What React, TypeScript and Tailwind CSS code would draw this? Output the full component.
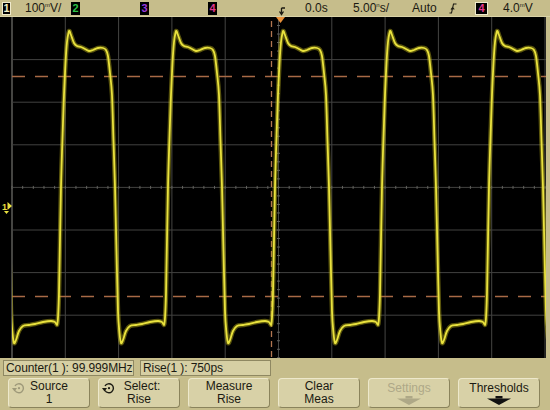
import React from "react"

type Pt = [number, number]

// one period of the trace, x relative to the rising edge midpoint
const PERIOD: Pt[] = [
  [-3.5, 322], [-2, 292], [0, 186], [2, 122], [3, 94], [4.5, 62], [6, 41], [7.5, 32], [8.5, 30],
  [10, 34], [13, 42], [16, 45], [20, 46], [24, 48], [28, 50], [32, 49], [37, 47], [42, 47],
  [45, 49], [47, 55], [49, 72], [51, 94], [52.5, 140], [54, 186], [55.5, 250], [57, 310],
  [58.5, 332], [60, 342], [62, 339], [65, 330], [69, 325], [75, 324], [81, 323], [89, 321],
  [97, 320], [101, 321],
]

const RISE0 = 61
const STEP = 107

function tracePoints(): Pt[] {
  const pts: Pt[] = []
  for (let k = -1; k <= 5; k++) {
    const r = RISE0 + STEP * k
    PERIOD.forEach(([dx, y]) => {
      const x = r + dx
      if (x > -10 && x < 560) pts.push([x, y])
    })
  }
  return pts
}

function smooth(pts: Pt[]) {
  let d = `M${pts[0][0]},${pts[0][1]}`
  for (let i = 0; i < pts.length - 1; i++) {
    const p0 = pts[i - 1] || pts[i]
    const p1 = pts[i]
    const p2 = pts[i + 1]
    const p3 = pts[i + 2] || p2
    const c1x = p1[0] + (p2[0] - p0[0]) / 6
    const c1y = p1[1] + (p2[1] - p0[1]) / 6
    const c2x = p2[0] - (p3[0] - p1[0]) / 6
    const c2y = p2[1] - (p3[1] - p1[1]) / 6
    d += ` C${c1x.toFixed(2)},${c1y.toFixed(2)} ${c2x.toFixed(2)},${c2y.toFixed(2)} ${p2[0]},${p2[1]}`
  }
  return d
}

const X0 = 12
const DX = 53.3
const Y0 = 16
const DY = 42.6

const Screen = () => {
  const vx = Array.from({ length: 11 }, (_, i) => X0 + DX * i)
  const hy = Array.from({ length: 9 }, (_, i) => Y0 + DY * i)
  const cx = X0 + DX * 5
  const cy = Y0 + DY * 4
  const ticksX = Array.from({ length: 51 }, (_, i) => X0 + (DX / 5) * i)
  const ticksY = Array.from({ length: 41 }, (_, i) => Y0 + (DY / 5) * i)
  const d = smooth(tracePoints())

  return (
    <svg width="546" height="341" viewBox="0 16 546 341" className="block">
      <defs>
        <clipPath id="grat">
          <rect x="12" y="16" width="534" height="341" />
        </clipPath>
      </defs>
      <rect x="0" y="16" width="546" height="341" fill="#000" />

      {/* graticule */}
      {vx.map((x, i) => (
        <line key={"v" + i} x1={x} x2={x} y1={16} y2={357} stroke={i === 0 ? "#8a8a84" : "#454543"} strokeWidth="1" />
      ))}
      {hy.slice(1, 8).map((y, i) => (
        <line key={"h" + i} x1={12} x2={546} y1={y} y2={y} stroke="#424240" strokeWidth="1" />
      ))}
      {ticksX.map((x, i) => (
        <line key={"tx" + i} x1={x} x2={x} y1={cy - 1.5} y2={cy + 1.5} stroke="#62625e" strokeWidth="1" />
      ))}
      {ticksY.map((y, i) => (
        <line key={"ty" + i} x1={cx - 1.5} x2={cx + 1.5} y1={y} y2={y} stroke="#62625e" strokeWidth="1" />
      ))}

      {/* threshold cursors */}
      <line x1="12" x2="546" y1="75.5" y2="75.5" stroke="#a86a46" strokeWidth="1.4" strokeDasharray="13 10" />
      <line x1="12" x2="546" y1="295.5" y2="295.5" stroke="#a86a46" strokeWidth="1.4" strokeDasharray="13 10" />
      {/* trigger position */}
      <line x1="271.5" x2="271.5" y1="20" y2="357" stroke="#b07650" strokeWidth="1.3" strokeDasharray="6 4" />
      <polygon points="276,16 285,16 280.5,22" fill="#e8903a" />

      {/* trace */}
      <g clipPath="url(#grat)" fill="none" strokeLinejoin="round" strokeLinecap="round">
        <path d={d} stroke="#b3aa18" strokeWidth="4.5" opacity="0.5" />
        <path d={d} stroke="#e9e23e" strokeWidth="1.8" />
      </g>

      {/* ground marker */}
      <text x="2" y="209" fontSize="9" fontWeight="bold" fill="#e8e040" fontFamily="Liberation Sans, Arial, sans-serif">1</text>
      <polygon points="7.5,201 12,205 7.5,209" fill="#e8e040" />
      <polygon points="4,210 9,210 6.5,213" fill="#e8e040" />
    </svg>
  )
}

const ChanBox = ({ n, color, active }: { n: string; color: string; active?: boolean }) => (
  <div
    className={
      "flex items-center justify-center bg-black h-[13px] text-[11px] font-bold leading-none " +
      (active ? "border border-[#efeacc]" : "")
    }
    style={{ color }}
  >
    {n}
  </div>
)

// the scope font draws "mV" / "ns" as one squeezed glyph
const Unit = ({ small, big }: { small: string; big: string }) => (
  <span className="whitespace-nowrap">
    <span className="text-[6px] align-top">{small}</span>
    <span>{big}</span>
  </span>
)

const TopBar = () => (
  <div className="flex items-center h-[16px] bg-[#c6bd8b] text-[12px] leading-none text-[#1b1a12] whitespace-nowrap">
    <div className="ml-[2px] w-[9px]">
      <ChanBox n="1" color="#f2eec6" active />
    </div>
    <div className="ml-[14px] w-[34px]">
      100<Unit small="m" big="V" />/
    </div>
    <div className="ml-[12px] w-[9px]">
      <ChanBox n="2" color="#2fc248" />
    </div>
    <div className="ml-[60px] w-[9px]">
      <ChanBox n="3" color="#9a38dc" />
    </div>
    <div className="ml-[59px] w-[9px]">
      <ChanBox n="4" color="#e0358e" />
    </div>
    <svg className="ml-[60px]" width="10" height="16" viewBox="0 0 10 16">
      <path d="M4.5 8 L4.5 14 M8 8 L4.5 8 M2.5 11.5 L4.5 14.5 L6.5 11.5" stroke="#1b1a12" strokeWidth="1.3" fill="none" />
    </svg>
    <div className="ml-[18px] w-[26px]">0.0s</div>
    <div className="ml-[22px] w-[40px]">
      5.00<Unit small="n" big="s" />/
    </div>
    <div className="ml-[19px] w-[28px]">Auto</div>
    <svg className="ml-[9px]" width="8" height="16" viewBox="0 0 8 16">
      <path d="M0.5 13 L2.5 13 L4.5 4 L7.5 4 M2 9.5 L3.7 7.5 L5.2 9.5" stroke="#1b1a12" strokeWidth="1.1" fill="none" />
    </svg>
    <div className="ml-[18px] w-[13px]">
      <ChanBox n="4" color="#e0358e" active />
    </div>
    <div className="ml-[15px]">
      4.0<Unit small="m" big="V" />
    </div>
  </div>
)

const KnobIcon = ({ faded }: { faded?: boolean }) => (
  <svg width="15" height="12" viewBox="0 0 15 12" className={faded ? "opacity-30" : ""}>
    <path d="M4 4 A4.5 4.5 0 1 1 4 8.5" stroke="#1b1a12" strokeWidth="1.4" fill="none" />
    <polygon points="1,6 6,6 3.5,9.5" fill="#1b1a12" />
    <circle cx="8" cy="6.2" r="1.1" fill="#1b1a12" />
  </svg>
)

const DownArrow = ({ color }: { color: string }) => (
  <svg width="24" height="9" viewBox="0 0 24 9" className="mx-auto">
    <rect x="8.5" y="0" width="7" height="2.5" fill={color} />
    <polygon points="0,2.5 24,2.5 12,9" fill={color} />
  </svg>
)

const SoftKey = ({ children, icon }: { children: React.ReactNode; icon?: React.ReactNode }) => (
  <div className="relative w-[82px] h-[30px] rounded-[4px] bg-[#d8d1a7] border border-t-[#ede8cb] border-l-[#ede8cb] border-b-[#8a835c] border-r-[#8a835c] flex flex-col items-center justify-center text-[12px] leading-[13px] text-[#1b1a12]">
    {icon && <div className="absolute left-[2px] top-[3px]">{icon}</div>}
    {children}
  </div>
)

const ReadoutBox = ({ children }: { children: React.ReactNode }) => (
  <div className="w-[131px] h-[16px] bg-[#d6cfa4] border border-[#8f8862] pl-[2px] text-[12px] leading-[14px] text-[#1b1a12] whitespace-nowrap overflow-hidden tracking-[-0.1px]">
    {children}
  </div>
)

const App = () => {
  return (
    <div
      className="w-[550px] h-[410px] overflow-hidden bg-[#c6bd8b]"
      style={{ fontFamily: '"Liberation Sans", Arial, sans-serif' }}
    >
      <TopBar />
      <div className="flex h-[341px] border-t border-[#d9d2a6]">
        <Screen />
      </div>
      <div className="h-[53px] bg-[#c6bd8b] px-[3px] pt-[3px]">
        <div className="flex gap-[6px] h-[16px]">
          <ReadoutBox>Counter(1 ): 99.999MHz</ReadoutBox>
          <ReadoutBox>Rise(1 ): 750ps</ReadoutBox>
        </div>
        <div className="flex gap-[8px] pl-[5px] pt-[2px]">
          <SoftKey icon={<KnobIcon faded />}>
            <span>Source</span>
            <span>1</span>
          </SoftKey>
          <SoftKey icon={<KnobIcon />}>
            <span className="pl-[6px]">Select:</span>
            <span>Rise</span>
          </SoftKey>
          <SoftKey>
            <span>Measure</span>
            <span>Rise</span>
          </SoftKey>
          <SoftKey>
            <span>Clear</span>
            <span>Meas</span>
          </SoftKey>
          <SoftKey>
            <span className="text-[#aea887]">Settings</span>
            <div className="mt-[1px]">
              <DownArrow color="#aea887" />
            </div>
          </SoftKey>
          <SoftKey>
            <span>Thresholds</span>
            <div className="mt-[1px]">
              <DownArrow color="#111" />
            </div>
          </SoftKey>
        </div>
      </div>
    </div>
  )
}

export default App
